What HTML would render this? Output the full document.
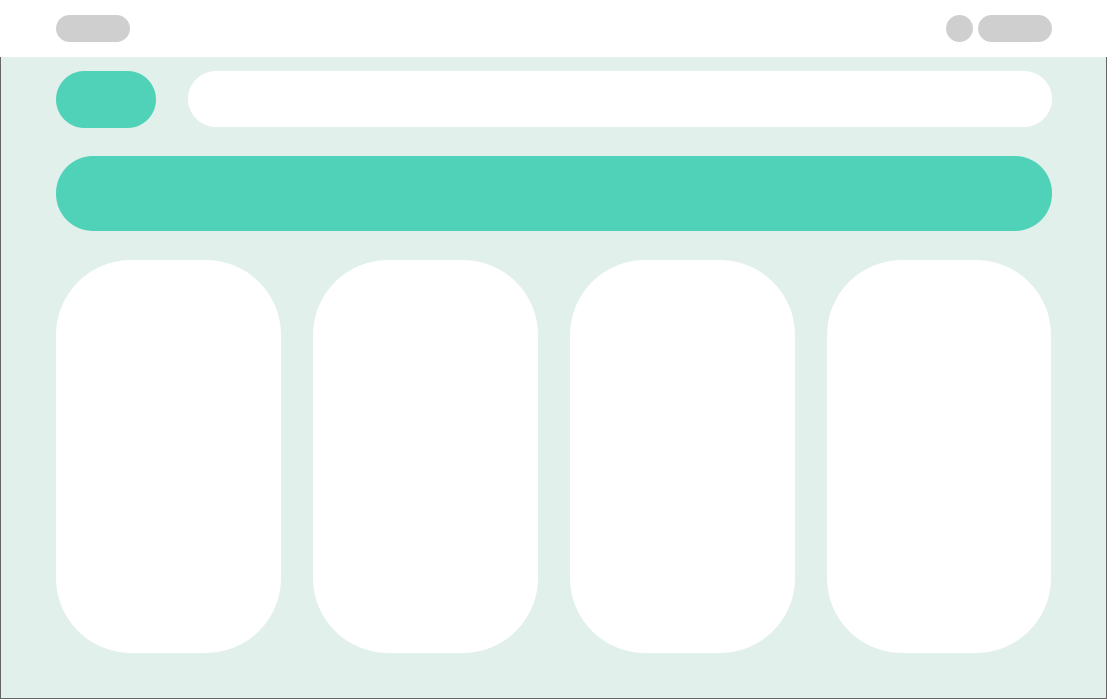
<!DOCTYPE html>
<html><head><style>
*{margin:0;padding:0;box-sizing:border-box}
body{width:1107px;height:699px;background:#fff;position:relative;overflow:hidden}
.a{position:absolute}
.g{background:#cfcfcf}
</style></head><body>
<div class="a g" style="left:56px;top:15px;width:74px;height:27px;border-radius:14px"></div>
<div class="a g" style="left:946px;top:15px;width:27px;height:27px;border-radius:50%"></div>
<div class="a g" style="left:978px;top:15px;width:74px;height:27px;border-radius:14px"></div>
<div class="a" style="left:0;top:57px;width:1107px;height:642px;background:#e1f0eb;border:1px solid #666;border-top:none"></div>
<div class="a" style="left:56px;top:71px;width:100px;height:57px;border-radius:29px;background:#50d2b9"></div>
<div class="a" style="left:188px;top:71px;width:864px;height:56px;border-radius:28px;background:#fff"></div>
<div class="a" style="left:56px;top:156px;width:996px;height:75px;border-radius:37px;background:#50d2b9"></div>
<div class="a" style="left:56px;top:260px;width:225px;height:393px;border-radius:75px;background:#fff"></div>
<div class="a" style="left:313px;top:260px;width:225px;height:393px;border-radius:75px;background:#fff"></div>
<div class="a" style="left:570px;top:260px;width:225px;height:393px;border-radius:75px;background:#fff"></div>
<div class="a" style="left:827px;top:260px;width:224px;height:393px;border-radius:75px;background:#fff"></div>
</body></html>
